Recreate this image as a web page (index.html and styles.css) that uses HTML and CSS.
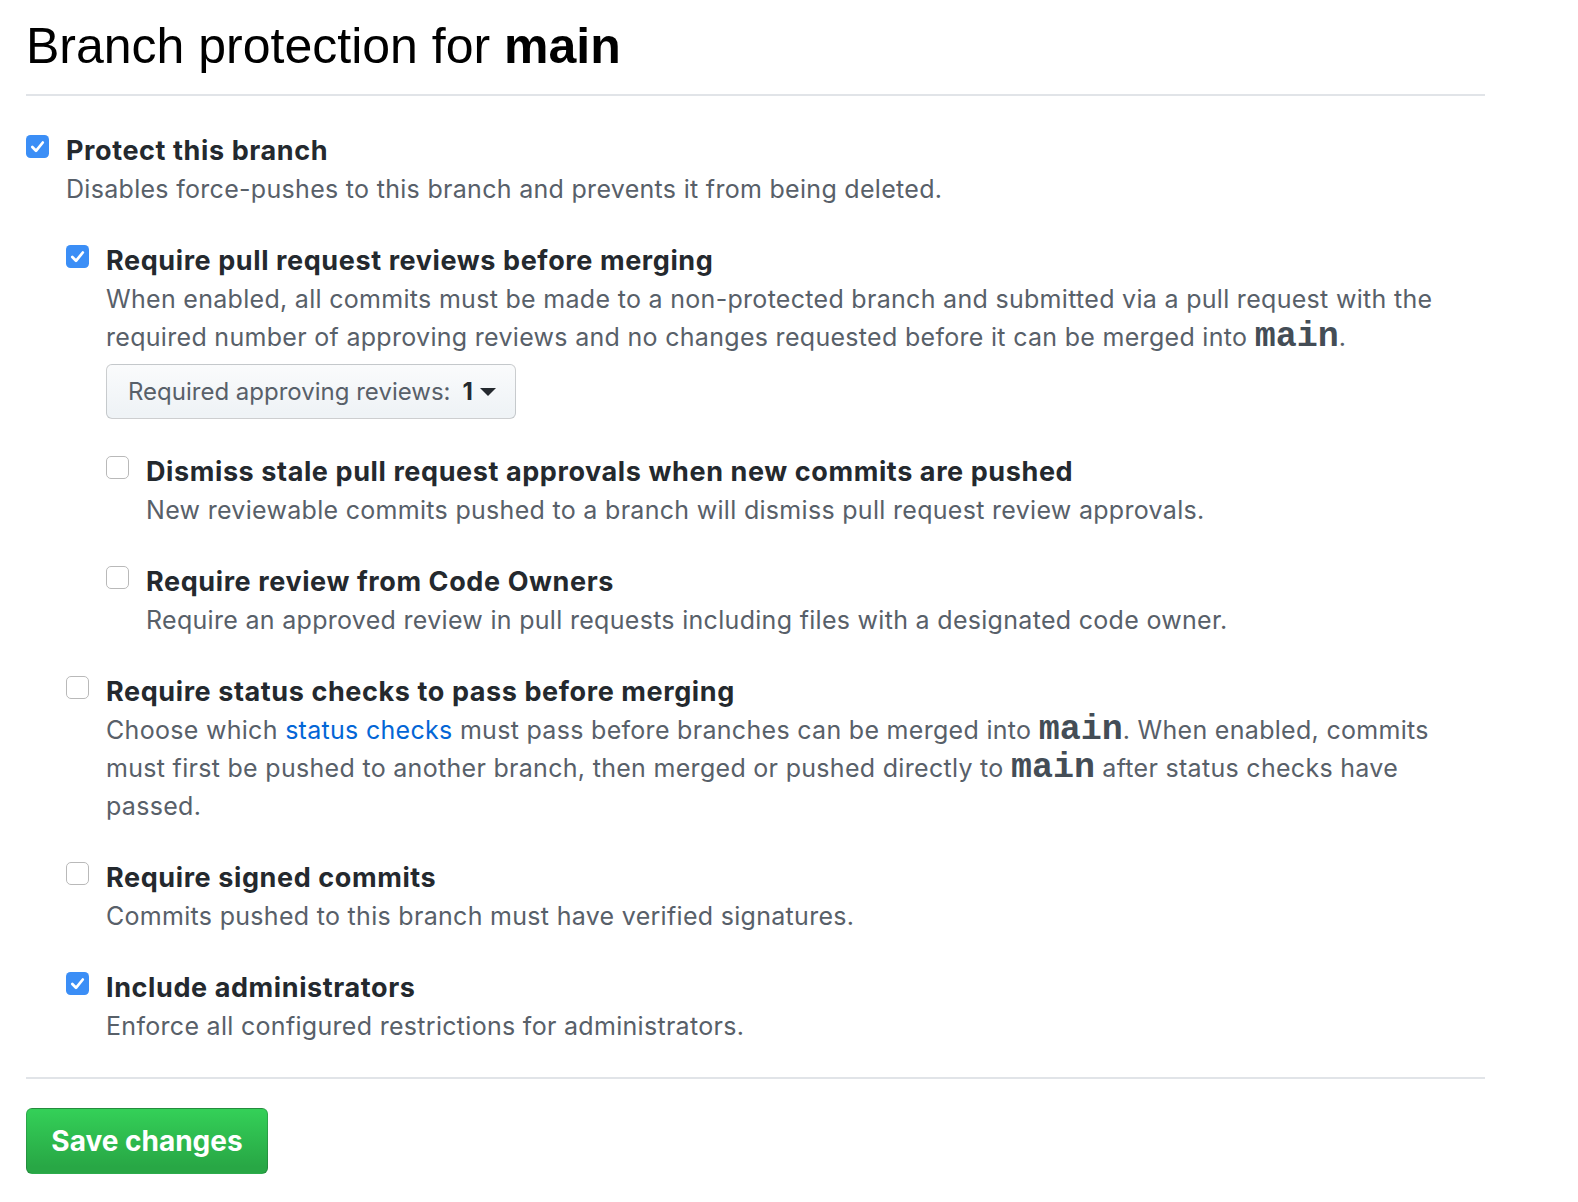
FILE: index.html
```html
<!DOCTYPE html>
<html>
<head>
<meta charset="utf-8">
<title>Branch protection for main</title>
<link rel="stylesheet" href="styles.css">
</head>
<body>
<div class="page">
  <h2 class="subhead">Branch protection for <strong>main</strong></h2>

  <div class="option top">
    <span class="cb">
      <svg width="23" height="23" viewBox="0 0 23 23"><rect x="0" y="0" width="23" height="23" rx="4.5" fill="#3b8ef6"/><polyline points="6.3,12 10,15.8 16.8,7.5" fill="none" stroke="#fff" stroke-width="2.7" stroke-linecap="round" stroke-linejoin="round"/></svg>
    </span>
    <div class="opt-body">
      <div class="opt-title">Protect this branch</div>
      <p class="opt-note">Disables force-pushes to this branch and prevents it from being deleted.</p>

      <div class="option">
        <span class="cb">
          <svg width="23" height="23" viewBox="0 0 23 23"><rect x="0" y="0" width="23" height="23" rx="4.5" fill="#3b8ef6"/><polyline points="6.3,12 10,15.8 16.8,7.5" fill="none" stroke="#fff" stroke-width="2.7" stroke-linecap="round" stroke-linejoin="round"/></svg>
        </span>
        <div class="opt-body">
          <div class="opt-title">Require pull request reviews before merging</div>
          <p class="opt-note">When enabled, all commits must be made to a non-protected branch and submitted via a pull request with the required number of approving reviews and no changes requested before it can be merged into <code class="mono">main</code>.</p>
          <button class="select-btn" type="button"><span class="select-label">Required approving reviews:</span> <strong class="select-val">1</strong><span class="caret"></span></button>

          <div class="option">
            <span class="cb">
              <svg width="23" height="23" viewBox="0 0 23 23"><rect x="0.5" y="0.5" width="22" height="22" rx="4.5" fill="#fff" stroke="#b9b9b9"/></svg>
            </span>
            <div class="opt-body">
              <div class="opt-title">Dismiss stale pull request approvals when new commits are pushed</div>
              <p class="opt-note">New reviewable commits pushed to a branch will dismiss pull request review approvals.</p>
            </div>
          </div>

          <div class="option">
            <span class="cb">
              <svg width="23" height="23" viewBox="0 0 23 23"><rect x="0.5" y="0.5" width="22" height="22" rx="4.5" fill="#fff" stroke="#b9b9b9"/></svg>
            </span>
            <div class="opt-body">
              <div class="opt-title">Require review from Code Owners</div>
              <p class="opt-note">Require an approved review in pull requests including files with a designated code owner.</p>
            </div>
          </div>
        </div>
      </div>

      <div class="option">
        <span class="cb">
          <svg width="23" height="23" viewBox="0 0 23 23"><rect x="0.5" y="0.5" width="22" height="22" rx="4.5" fill="#fff" stroke="#b9b9b9"/></svg>
        </span>
        <div class="opt-body">
          <div class="opt-title">Require status checks to pass before merging</div>
          <p class="opt-note">Choose which <a class="link" href="#">status checks</a> must pass before branches can be merged into <code class="mono">main</code>. When enabled, commits must first be pushed to another branch, then merged or pushed directly to <code class="mono">main</code> after status checks have passed.</p>
        </div>
      </div>

      <div class="option">
        <span class="cb">
          <svg width="23" height="23" viewBox="0 0 23 23"><rect x="0.5" y="0.5" width="22" height="22" rx="4.5" fill="#fff" stroke="#b9b9b9"/></svg>
        </span>
        <div class="opt-body">
          <div class="opt-title">Require signed commits</div>
          <p class="opt-note">Commits pushed to this branch must have verified signatures.</p>
        </div>
      </div>

      <div class="option">
        <span class="cb">
          <svg width="23" height="23" viewBox="0 0 23 23"><rect x="0" y="0" width="23" height="23" rx="4.5" fill="#3b8ef6"/><polyline points="6.3,12 10,15.8 16.8,7.5" fill="none" stroke="#fff" stroke-width="2.7" stroke-linecap="round" stroke-linejoin="round"/></svg>
        </span>
        <div class="opt-body">
          <div class="opt-title">Include administrators</div>
          <p class="opt-note">Enforce all configured restrictions for administrators.</p>
        </div>
      </div>
    </div>
  </div>

  <div class="actions">
    <button class="save-btn" type="button">Save changes</button>
  </div>
</div>
</body>
</html>
```

FILE: styles.css
```css
html, body {
  margin: 0;
  padding: 0;
  background: #ffffff;
}

body {
  font-family: Inter, "Noto Sans", "Liberation Sans", sans-serif;
  color: #24292e;
}

.page {
  width: 1459px;
  padding: 16px 0 0 26px;
}

.subhead {
  margin: 0;
  padding: 0 0 18px 0;
  font-family: "Liberation Sans", Arial, sans-serif;
  font-size: 50px;
  line-height: 60px;
  font-weight: normal;
  color: #000;
  border-bottom: 2px solid #e1e4e8;
}

.subhead strong {
  font-weight: bold;
}

.option {
  display: flex;
  align-items: flex-start;
  margin-top: 33px;
}

.option.top {
  margin-top: 35px;
}

.cb {
  flex: 0 0 23px;
  width: 23px;
  height: 23px;
  margin-top: 4px;
  margin-right: 17px;
  display: block;
}

.cb svg {
  display: block;
}

.opt-body {
  flex: 1 1 auto;
  min-width: 0;
}

.opt-title {
  padding-top: 1px;
  font-size: 27px;
  line-height: 38px;
  font-weight: 700;
  letter-spacing: 0.6px;
  color: #24292e;
}

.opt-note {
  margin: 0;
  font-size: 25px;
  line-height: 38px;
  letter-spacing: 0.3px;
  color: #586069;
}

.mono {
  font-family: "Liberation Mono", "Courier New", monospace;
  font-size: 35px;
  font-weight: bold;
  letter-spacing: 0;
  line-height: 0;
  color: #444d56;
}

.link {
  color: #0366d6;
  text-decoration: none;
}

.select-btn {
  display: flex;
  align-items: center;
  width: 410px;
  height: 55px;
  margin-top: 8px;
  padding: 0 0 0 21px;
  border: 1px solid rgba(27, 31, 35, 0.2);
  border-radius: 6px;
  background: linear-gradient(-180deg, #fafbfc 0%, #eff3f6 90%);
  font-family: Inter, "Noto Sans", "Liberation Sans", sans-serif;
  font-size: 24px;
  color: #586069;
  cursor: pointer;
}

.select-label {
  white-space: pre;
}

.select-val {
  margin-left: 12px;
  color: #24292e;
  font-weight: 700;
}

.caret {
  display: inline-block;
  width: 0;
  height: 0;
  margin-left: 7px;
  border-left: 8px solid transparent;
  border-right: 8px solid transparent;
  border-top: 8px solid #24292e;
}

.actions {
  margin-top: 32px;
  padding-top: 29px;
  border-top: 2px solid #e1e4e8;
}

.save-btn {
  display: block;
  width: 242px;
  height: 66px;
  padding: 0;
  border: 1px solid rgba(27, 31, 35, 0.2);
  border-radius: 6px;
  background: linear-gradient(-180deg, #34d058 0%, #28a745 90%);
  color: #ffffff;
  font-family: Inter, "Noto Sans", "Liberation Sans", sans-serif;
  font-size: 28px;
  font-weight: 700;
  cursor: pointer;
}
```
